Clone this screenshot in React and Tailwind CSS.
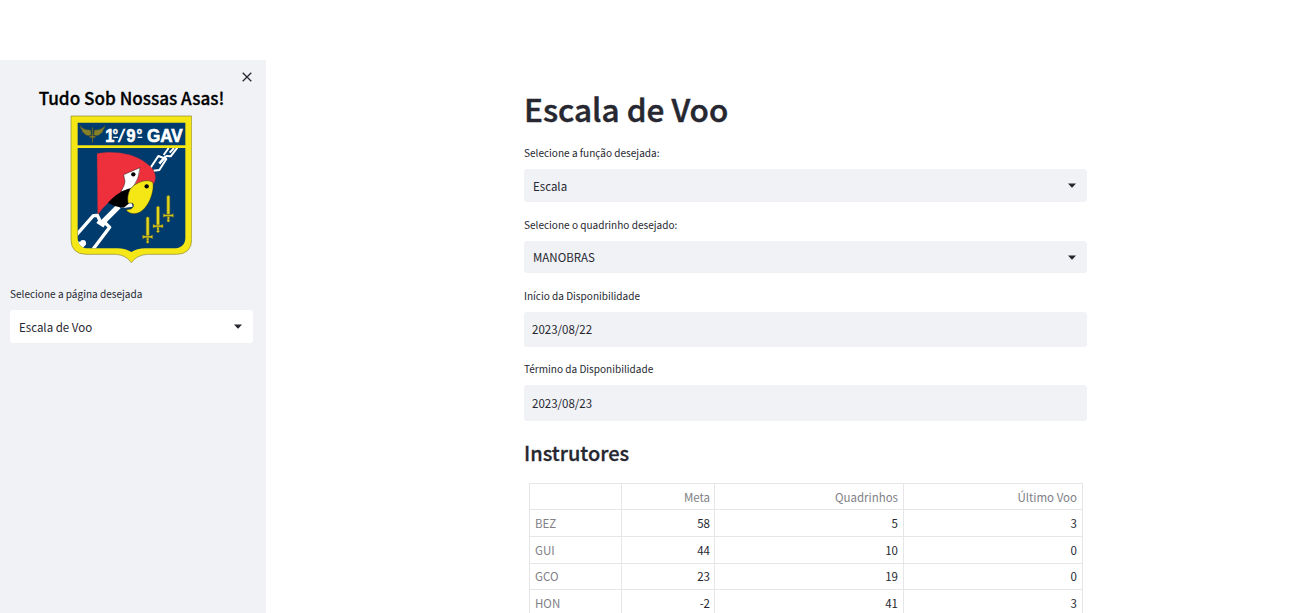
const labelCls = "text-[10.05px] leading-[16px] text-[#262730]";

function Caret() {
  return (
    <svg className="h-[5px] w-[8px]" viewBox="0 0 8 5">
      <path d="M0 .6h8L4.6 4.2q-.6.5-1.2 0z" fill="#262730" />
    </svg>
  );
}

function Sword({ x, y }) {
  return (
    <g transform={`translate(${x} ${y})`} fill="#e3d41c" stroke="#6b6a20" strokeWidth="1.5">
      <path d="M-4.500 2L0-1L4.500 2V56H-4.500Z" />
      <path d="M-3 62H3V72H-3Z" />
      <path d="M-15 54L-9 57H9L15 54V65L9 62H-9L-15 65Z" />
      <circle cx="0" cy="75" r="4" />
    </g>
  );
}

function Crest() {
  return (
    <svg className="h-[149px] w-[122px]" viewBox="30 27 366 447">
      <defs>
        <clipPath id="field"><path d="M53 126H376V395Q376 426 340 427H256Q230 428 214 438Q198 428 172 427H86Q53 426 53 395Z" /></clipPath>
      </defs>
      <path d="M33 30H395V400Q395 444 350 445H262Q230 447 214 470Q198 447 168 445H78Q33 444 33 400Z" fill="#f5e615" stroke="#8b8a30" strokeWidth="2" />
      <path d="M53 50H376V118H53Z" fill="#003b6d" />
      <path d="M53 126H376V395Q376 426 340 427H256Q230 428 214 438Q198 428 172 427H86Q53 426 53 395Z" fill="#003b6d" />
      <g fill="#85802a" stroke="#3e4630" strokeWidth="1.5">
        <path d="M60 57Q66 72 92 72L94 88Q78 92 72 82Q64 78 66 72Q60 68 60 57Z" />
        <path d="M135 57Q129 72 103 72L101 88Q117 92 123 82Q131 78 129 72Q135 68 135 57Z" />
        <path d="M96 64h3v26h7v5h-7v14h-3V95h-7v-5h7z" />
      </g>
      <g fill="#fff" stroke="#fff" strokeWidth="2" fontSize="54" fontWeight="700" fontFamily="Liberation Sans, sans-serif">
        <text transform="scale(.9 1)" y="107">
          <tspan x="151">1</tspan>
          <tspan x="176" fontSize="46" y="101" strokeWidth="1">º</tspan>
          <tspan x="197" y="107" fontWeight="400" fontStyle="italic">/</tspan>
          <tspan x="222">9</tspan>
          <tspan x="256" fontSize="48" y="102" strokeWidth="1">º</tspan>
        </text>
        <text x="261" y="107" textLength="107" lengthAdjust="spacingAndGlyphs">GAV</text>
      </g>
      <path d="M160 92H174V96H160ZM233 92H247V96H233Z" fill="#fff" />
      <g clipPath="url(#field)">
        <g transform="translate(30 102)" fill="none" stroke="#fff" strokeLinejoin="round" strokeWidth="6">
          <path d="M242 83L265 48L289 57L268 90L250 92" />
          <path d="M268 71L288 48" strokeWidth="8" />
          <path d="M281 45L296 24M288 48L302 49L322 23M299 38L312 24" />
        </g>
      </g>
      <g transform="translate(30 102)">
        <path d="M81 41C115 32 190 35 232 72C257 90 261 112 252 130L180 150L115 188Q96 204 83 226Z" fill="#ed303c" stroke="#7b2e45" strokeWidth="1" />
        <path d="M161 104L210 83Q208 115 188 144L152 156Q164 138 165 124Z" fill="#fff" stroke="#222" strokeWidth="1.5" />
        <circle cx="190" cy="103" r="6.500" />
      </g>
      <g clipPath="url(#field)">
        <g transform="translate(30 102)">
          <g fill="none" stroke="#fff" strokeWidth="10" strokeLinejoin="round">
            <path d="M18 286L70 227L82 226L90 242M103 246L119 262L69 328" />
            <path d="M92 253L146 199" strokeWidth="16" />
            <path d="M83 243L104 257" strokeWidth="14" />
          </g>
          <circle cx="39" cy="309" r="9" fill="#fff" />
          <path d="M20 302L48 313L34 330L20 326Z" fill="#fff" />
          <path d="M135 196L174 188L186 190L188 200L160 204Z" fill="#fff" />
        </g>
      </g>
      <g transform="translate(30 102)">
        <path d="M114 188C137 164 156 151 183 145L176 191L161 203Q130 200 114 188Z" />
        <path d="M180 148C198 125 235 114 249 128C254 160 230 218 195 221Q177 222 168 209L183 207Q195 199 188 190L174 189C172 175 173 163 180 148Z" fill="#f5e615" stroke="#222" strokeWidth="1.500" />
        <circle cx="230" cy="139" r="6.500" />
        <Sword x={233} y={231} />
        <Sword x={264} y={199} />
        <Sword x={295} y={167} />
      </g>
    </svg>
  );
}

function Select({ value, className }) {
  return (
    <div className={`flex items-center justify-between rounded-[3px] pl-[9px] pr-[11px] text-[11.5px] text-[#262730] ${className}`}>
      <span className="pt-[2px]">{value}</span>
      <Caret />
    </div>
  );
}

const headers = ["", "Meta", "Quadrinhos", "Último Voo"];
const rows = [
  { h: "grid-rows-[27px] leading-[26px]", cells: ["BEZ", "58", "5", "3"] },
  { h: "grid-rows-[27px] leading-[26px]", cells: ["GUI", "44", "10", "0"] },
  { h: "grid-rows-[26px] leading-[24px]", cells: ["GCO", "23", "19", "0"] },
  { h: "grid-rows-[27px] leading-[26px]", cells: ["HON", "-2", "41", "3"] },
];
const pads = ["pl-[5px] text-left text-[#808086]", "pr-[4px]", "pr-[5px]", "pr-[5px]"];

export default function App() {
  return (
    <div className="flex h-[613px] w-[1311px] overflow-hidden bg-white font-['Noto_Sans_CJK_SC',sans-serif] text-[#262730]">
      <aside className="mt-[60px] flex w-[266px] flex-col bg-[#f0f2f6] pl-[10px] pr-[13px]">
        <div className="flex h-[26px] justify-end pt-[12px]">
          <svg className="mr-[1px] h-[10px] w-[10px]" viewBox="0 0 10 10"><path d="M.7.7l8.6 8.6M9.3.7L.7 9.3" stroke="#262730" strokeWidth="1.3" /></svg>
        </div>
        <h2 className="h-[29px] text-center text-[17.15px] font-medium leading-[24px] text-black [-webkit-text-stroke:0.3px_black]">Tudo Sob Nossas Asas!</h2>
        <div className="flex justify-center pr-[1px]"><Crest /></div>
        <div className={`mt-[22px] ${labelCls}`}>Selecione a página desejada</div>
        <Select value="Escala de Voo" className="mt-[8px] h-[33px] bg-white" />
      </aside>
      <main className="ml-[258px] flex w-[563px] flex-col pt-[86px]">
        <h1 className="h-[59px] shrink-0 text-[31.5px] font-medium leading-[44px] [-webkit-text-stroke:0.5px_#262730]">Escala de Voo</h1>
        <div className={labelCls}>Selecione a função desejada:</div>
        <Select value="Escala" className="mt-[8px] h-[33px] shrink-0 bg-[#f0f2f6]" />
        <div className={`mt-[15px] ${labelCls}`}>Selecione o quadrinho desejado:</div>
        <Select value="MANOBRAS" className="mt-[8px] h-[32px] shrink-0 bg-[#f0f2f6]" />
        <div className={`mt-[15px] ${labelCls}`}>Início da Disponibilidade</div>
        <div className="mt-[8px] flex h-[35px] shrink-0 items-center rounded-[3px] bg-[#f0f2f6] pl-[8px] text-[11.5px]">2023/08/22</div>
        <div className={`mt-[14px] ${labelCls}`}>Término da Disponibilidade</div>
        <div className="mt-[8px] flex h-[36px] shrink-0 items-center rounded-[3px] bg-[#f0f2f6] pl-[8px] pt-[2px] text-[11.5px]">2023/08/23</div>
        <h2 className="mt-[17px] h-[45px] shrink-0 text-[20px] font-medium leading-[29px] [-webkit-text-stroke:0.3px_#262730]">Instrutores</h2>
        <div className="ml-[5px] w-[554px] shrink-0 border-l border-t border-[#e6e6e8] text-[11.5px]">
          <div className="grid grid-cols-[92px_93px_189px_179px] grid-rows-[26px] text-right leading-[26px] text-[#808086]">
            {headers.map((h, i) => (
              <div key={h} className={`border-b border-r border-[#e6e6e8] ${i === 1 ? "pr-[4px]" : "pr-[5px]"}`}>{h}</div>
            ))}
          </div>
          {rows.map((r) => (
            <div key={r.cells[0]} className={`grid grid-cols-[92px_93px_189px_179px] text-right ${r.h}`}>
              {r.cells.map((c, i) => (
                <div key={i} className={`border-b border-r border-[#e6e6e8] ${pads[i]}`}>{c}</div>
              ))}
            </div>
          ))}
        </div>
      </main>
    </div>
  );
}
